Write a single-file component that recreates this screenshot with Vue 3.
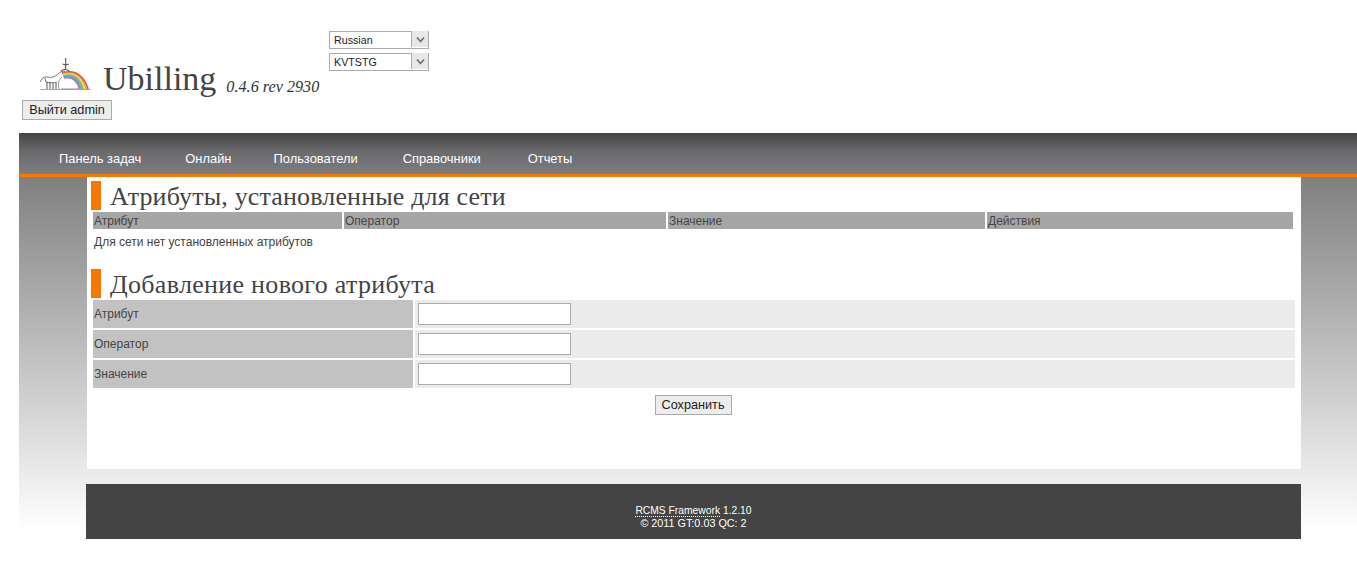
<script setup>
const nav = ['Панель задач', 'Онлайн', 'Пользователи', 'Справочники', 'Отчеты']
const columns = [
  { label: 'Атрибут', width: 249 },
  { label: 'Оператор', width: 322 },
  { label: 'Значение', width: 317 },
  { label: 'Действия', width: 306 },
]
const fields = ['Атрибут', 'Оператор', 'Значение']
const rainbow = [
  { d: 'M23 15Q42 10 49 31', color: '#d9534f' },
  { d: 'M23.400 16Q41 11.400 47.300 31', color: '#eda23c' },
  { d: 'M23.800 17Q40 12.800 45.600 31', color: '#e8dc55' },
  { d: 'M24.200 18Q39 14.200 43.900 31', color: '#7cc063' },
  { d: 'M24.600 19Q38 15.600 42.200 31', color: '#5fa8dc' },
  { d: 'M25 20Q37 17 40.500 31', color: '#a47cc8' },
]
</script>

<template>
  <div class="page">
    <header class="top">
      <div class="brand-col">
        <div class="brand">
          <svg class="logo" width="54" height="36" viewBox="0 0 54 36" aria-hidden="true">
            <path v-for="b in rainbow" :key="b.color" :d="b.d" fill="none" :stroke="b.color" stroke-width="1.800"/>
            <path d="M1 31.500H52" stroke="#aaa" stroke-width="1"/>
            <path d="M3 21c1-2 3-2 5-2 4 1 8 0 11-3 2-2 4-3 7-3M3 21l-2 3M6 20l1 4M7 24c4 1 8 1 11 0" fill="none" stroke="#666" stroke-width="0.900"/>
            <path d="M8 24v7M11 24v7M14 25v6M17 25v6" fill="none" stroke="#555" stroke-width="1"/>
            <path d="M20 31c-1-5-1-9 3-12M40 31h-18" fill="none" stroke="#888" stroke-width="0.900"/>
            <path d="M26.700 0v11M23.500 6l3.200 1 3.200-1M22 13c2-2 6-2 8 0" fill="none" stroke="#555" stroke-width="1.100"/>
          </svg>
          <span class="brand-name">Ubilling</span>
          <span class="brand-version">0.4.6 rev 2930</span>
        </div>
        <button class="btn exit" type="button">Выйти admin</button>
      </div>
      <div class="selects">
        <div class="select-box">
          <select><option>Russian</option></select>
          <span class="arrow"><svg width="9" height="7" viewBox="0 0 9 7"><path d="M1 1.500l3.500 4 3.500-4" fill="none" stroke="#6b7280" stroke-width="1.800"/></svg></span>
        </div>
        <div class="select-box">
          <select><option>KVTSTG</option></select>
          <span class="arrow"><svg width="9" height="7" viewBox="0 0 9 7"><path d="M1 1.500l3.500 4 3.500-4" fill="none" stroke="#6b7280" stroke-width="1.800"/></svg></span>
        </div>
      </div>
    </header>

    <div class="shell">
      <nav class="nav">
        <a v-for="item in nav" :key="item" class="nav-link">{{ item }}</a>
      </nav>
      <div class="stage">
        <main class="content">
          <h2 class="heading">Атрибуты, установленные для сети</h2>
          <div class="grid-head">
            <div v-for="c in columns" :key="c.label" class="grid-cell" :style="{ width: c.width + 'px' }">{{ c.label }}</div>
          </div>
          <p class="empty">Для сети нет установленных атрибутов</p>
          <h2 class="heading second">Добавление нового атрибута</h2>
          <form class="form" @submit.prevent>
            <div v-for="f in fields" :key="f" class="form-row">
              <label class="form-label">{{ f }}</label>
              <div class="form-value"><input class="input" type="text" /></div>
            </div>
            <div class="form-actions"><button class="btn" type="submit">Сохранить</button></div>
          </form>
        </main>
        <footer class="footer">
          <div class="footer-line"><span class="footer-link">RCMS Framework</span> 1.2.10</div>
          <div class="footer-line wide">© 2011 GT:0.03 QC: 2</div>
        </footer>
      </div>
    </div>
  </div>
</template>

<style>
html, body { background: #fff; }
</style>

<style scoped>
.page { height: 563px; overflow: hidden; font-family: "Liberation Sans", Arial, sans-serif; color: #444; }
.top { display: flex; height: 133px; padding-left: 22px; box-sizing: border-box; }
.brand-col { width: 307px; padding-top: 58px; }
.brand { display: flex; align-items: flex-end; height: 42px; padding-left: 17px; }
.logo { margin-bottom: 6px; flex: none; }
.brand-name { font: 34px/42px "Liberation Serif", serif; color: #444; margin-left: 10px; }
.brand-version { font: italic 16.200px/20px "Liberation Serif", serif; color: #333; margin-left: 10px; margin-bottom: 3px; white-space: nowrap; }
.btn { display: block; height: 20px; padding: 0 2px; box-sizing: border-box; background: #ededed; border: 1px solid #aaa; font: 12.700px "Liberation Sans", Arial, sans-serif; color: #222; border-radius: 0; }
.exit { width: 90px; }
.selects { padding-top: 30px; display: flex; flex-direction: column; gap: 4px; }
.select-box { position: relative; width: 100px; height: 18px; }
.select-box select { appearance: none; width: 100%; height: 100%; border: 1px solid #aaa; background: #fff; font: 10.700px "Liberation Sans", Arial, sans-serif; color: #222; padding: 0 0 0 4px; border-radius: 0; box-sizing: border-box; }
.arrow { position: absolute; right: 1px; top: 1px; bottom: 1px; width: 16px; background: #e8e8e8; border-left: 1px solid #aaa; display: flex; align-items: center; justify-content: center; }
.shell { margin-left: 19px; }
.nav { height: 41px; border-bottom: 3px solid #f57900; background: linear-gradient(#444 0, #6a6a6d 45%, #7d7e82 100%); display: flex; }
.nav-link { font-size: 12.900px; line-height: 52px; color: #fff; }
.nav-link:nth-child(1) { margin-left: 40px; }
.nav-link:nth-child(2) { margin-left: 44px; }
.nav-link:nth-child(3) { margin-left: 42px; }
.nav-link:nth-child(4) { margin-left: 45px; }
.nav-link:nth-child(5) { margin-left: 47px; }
.stage { height: 353px; background: linear-gradient(#808080, #fff); padding-left: 67px; }
.content { margin-left: 1px; width: 1214px; height: 292px; background: #fff; box-sizing: border-box; padding: 4px 6px 0 4px; }
.heading { margin: 0; height: 29px; border-left: 10px solid #f57900; padding-left: 9px; font: 400 26px/31px "Liberation Serif", serif; letter-spacing: 0.150px; color: #444; white-space: nowrap; }
.grid-head { display: flex; gap: 2px; margin: 2px 0 0 2px; }
.grid-cell { height: 17px; background: #a6a6a6; font-size: 12px; line-height: 18px; padding-left: 1px; box-sizing: border-box; color: #444; }
.empty { margin: 6px 0 0 3px; font-size: 12px; line-height: 14px; }
.second { margin-top: 20px; letter-spacing: 0.300px; }
.form { margin: 2px 0 0 2px; }
.form-row { display: flex; gap: 2px; height: 28px; margin-bottom: 2px; }
.form-label { width: 320px; background: #c2c2c2; font-size: 12px; line-height: 28px; padding-left: 1px; box-sizing: border-box; }
.form-value { width: 880px; background: #ebebeb; padding: 3px 0 0 3px; box-sizing: border-box; }
.input { display: block; width: 153px; height: 22px; box-sizing: border-box; border: 1px solid #aaa; background: #fff; padding: 0 2px; border-radius: 0; }
.form-actions { display: flex; justify-content: center; padding: 5px 2px 0 0; }
.form-actions .btn { width: 77px; }
.footer { margin-top: 15px; width: 1215px; height: 55px; background: #444; color: #fff; text-align: center; font-size: 10.300px; line-height: 13px; padding-top: 20px; box-sizing: border-box; }
.footer-line.wide { font-size: 10.800px; }
.footer-link { border-bottom: 1px dotted #fff; }
</style>
